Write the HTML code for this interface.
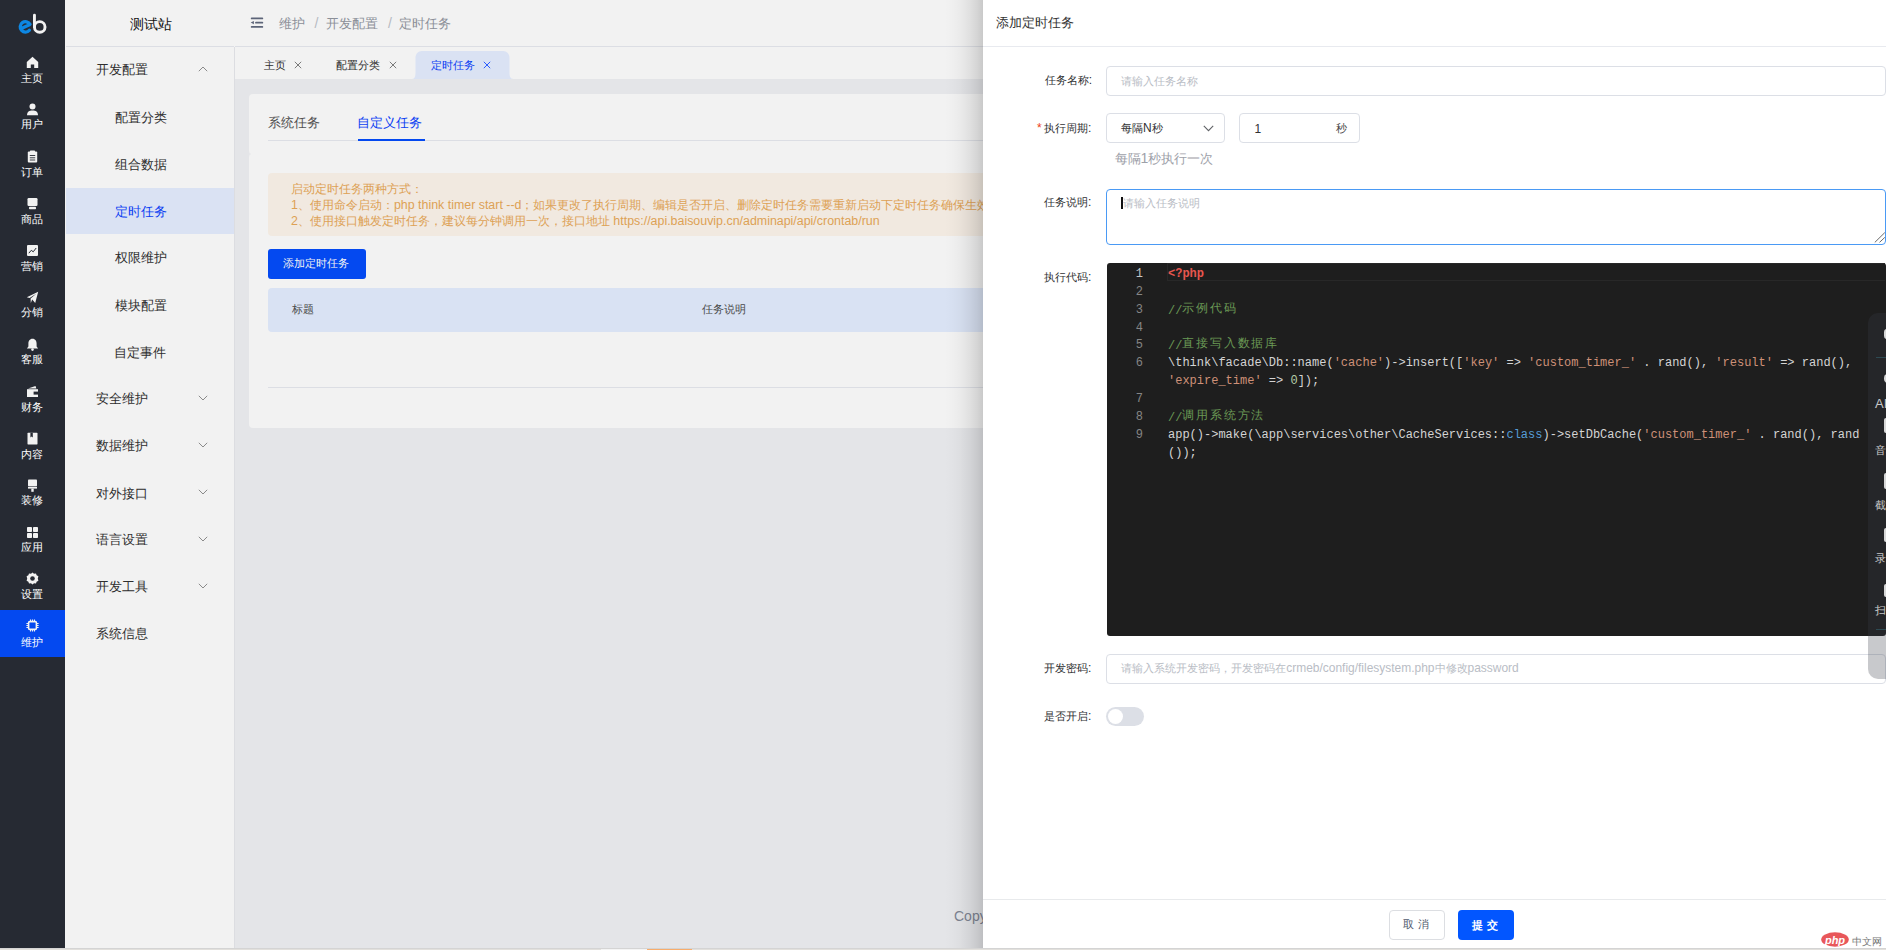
<!DOCTYPE html><html><head><meta charset="utf-8"><title>定时任务</title><style>
*{margin:0;padding:0;box-sizing:border-box}
html,body{width:1886px;height:950px;overflow:hidden;background:#e4e5e8;font-family:"Liberation Sans",sans-serif;color:#333}
.a{position:absolute}
.t{position:absolute;white-space:nowrap}
.inp{position:absolute;border:1px solid #dcdfe6;border-radius:4px;background:#fff}
.code{position:absolute;font-family:"Liberation Mono",monospace;font-size:12px;line-height:18px;white-space:pre;color:#d4d4d4}
.ln{position:absolute;font-family:"Liberation Mono",monospace;font-size:12px;line-height:18px;color:#858585;text-align:right;width:40px}
.cj{font-family:"Liberation Sans",sans-serif;font-size:12px;letter-spacing:1.8px;position:relative;top:-2px}
.str{color:#ce9178}.cm{color:#6a9955}.kw{color:#569cd6}.php{color:#e8564e;font-weight:bold}.num{color:#b5cea8}
</style></head><body>
<div class="a" style="left:0;top:0;width:65px;height:948px;background:#262a33"></div>
<svg class="a" style="left:0;top:0" width="65" height="48" viewBox="0 0 65 48">
<path d="M29.4 30.2 A5.2 5.2 0 1 1 30.0 24.4 L21.3 28.4" fill="none" stroke="#0d87e3" stroke-width="3.3" stroke-linecap="round" stroke-linejoin="round"/>
<circle cx="39.75" cy="26.9" r="5.3" fill="none" stroke="#f2f2f2" stroke-width="2.9"/>
<path d="M34.45 15.3 V26.9" fill="none" stroke="#f2f2f2" stroke-width="2.9" stroke-linecap="round"/>
</svg>
<div id="s1_0" class="t" style="left:20.50px;top:70.50px;line-height:12.19px;color:#fff;"><span style="font-size:11.4px">主页</span></div>
<svg class="a" style="left:26px;top:56px" width="13" height="13" viewBox="0 0 13 13" fill="#f2f2f2">
<path d="M6.5 0.8 L12.2 6 V12 H8.2 V8.6 H4.8 V12 H0.8 V6 Z"/>
</svg>
<div id="s1_1" class="t" style="left:20.50px;top:117.25px;line-height:12.19px;color:#fff;"><span style="font-size:11.4px">用户</span></div>
<svg class="a" style="left:26px;top:103px" width="13" height="13" viewBox="0 0 13 13" fill="#f2f2f2">
<circle cx="6.5" cy="3.6" r="3"/><path d="M1 12.3 C1 8.6 3.2 7.4 6.5 7.4 C9.8 7.4 12 8.6 12 12.3 Z"/>
</svg>
<div id="s1_2" class="t" style="left:20.50px;top:165.00px;line-height:12.19px;color:#fff;"><span style="font-size:11.4px">订单</span></div>
<svg class="a" style="left:26px;top:150px" width="13" height="13" viewBox="0 0 13 13" fill="#f2f2f2">
<rect x="1.8" y="1.6" width="9.4" height="11" rx="1"/><rect x="4" y="0.4" width="5" height="2.4" rx=".6"/><path d="M3.8 5.5h5.4M3.8 7.8h5.4M3.8 10h5.4" stroke="#262a33" stroke-width=".9"/>
</svg>
<div id="s1_3" class="t" style="left:20.50px;top:211.75px;line-height:12.19px;color:#fff;"><span style="font-size:11.4px">商品</span></div>
<svg class="a" style="left:26px;top:197px" width="13" height="13" viewBox="0 0 13 13" fill="#f2f2f2">
<rect x="1.5" y="1" width="10" height="8" rx="1.2"/><rect x="3" y="9.8" width="7" height="2.4" rx=".8"/>
</svg>
<div id="s1_4" class="t" style="left:20.50px;top:258.50px;line-height:12.19px;color:#fff;"><span style="font-size:11.4px">营销</span></div>
<svg class="a" style="left:26px;top:244px" width="13" height="13" viewBox="0 0 13 13" fill="#f2f2f2">
<rect x="1" y="1" width="11" height="11" rx="1"/><path d="M2.8 9.2 L5.3 6.3 L7.2 7.8 L10.2 4" fill="none" stroke="#262a33" stroke-width="1"/>
</svg>
<div id="s1_5" class="t" style="left:20.50px;top:305.25px;line-height:12.19px;color:#fff;"><span style="font-size:11.4px">分销</span></div>
<svg class="a" style="left:26px;top:291px" width="13" height="13" viewBox="0 0 13 13" fill="#f2f2f2">
<path d="M0.8 6.2 L12.2 0.8 L9.2 12 L6.2 8.6 L4.8 12 L4.6 7.6 L10.6 2.6 L3.6 7 Z"/>
</svg>
<div id="s1_6" class="t" style="left:20.50px;top:352.00px;line-height:12.19px;color:#fff;"><span style="font-size:11.4px">客服</span></div>
<svg class="a" style="left:26px;top:338px" width="13" height="13" viewBox="0 0 13 13" fill="#f2f2f2">
<path d="M6.5 0.8 C3.6 0.8 2.4 3.2 2.4 5.6 V8.6 L0.9 10.4 H12.1 L10.6 8.6 V5.6 C10.6 3.2 9.4 0.8 6.5 0.8 Z"/><circle cx="6.5" cy="11.6" r="1.3"/>
</svg>
<div id="s1_7" class="t" style="left:20.50px;top:399.75px;line-height:12.19px;color:#fff;"><span style="font-size:11.4px">财务</span></div>
<svg class="a" style="left:26px;top:385px" width="13" height="13" viewBox="0 0 13 13" fill="#f2f2f2">
<path d="M1 4.2 H12 V12 H1 Z"/><path d="M2 3.6 L9.5 0.9 L10.4 3.6 Z"/><rect x="7.6" y="6.6" width="4.4" height="3" fill="#262a33"/>
</svg>
<div id="s1_8" class="t" style="left:20.50px;top:446.50px;line-height:12.19px;color:#fff;"><span style="font-size:11.4px">内容</span></div>
<svg class="a" style="left:26px;top:432px" width="13" height="13" viewBox="0 0 13 13" fill="#f2f2f2">
<rect x="1.5" y="0.8" width="10" height="11.6" rx=".6"/><path d="M4.4 0.8 V5.6 L5.6 4.6 L6.8 5.6 V0.8" fill="#262a33"/>
</svg>
<div id="s1_9" class="t" style="left:20.50px;top:493.25px;line-height:12.19px;color:#fff;"><span style="font-size:11.4px">装修</span></div>
<svg class="a" style="left:26px;top:479px" width="13" height="13" viewBox="0 0 13 13" fill="#f2f2f2">
<rect x="2" y="0.6" width="9" height="6.6" rx=".8"/><rect x="2" y="7.8" width="9" height="1.8"/><rect x="5.3" y="9.6" width="2.4" height="3.2"/>
</svg>
<div id="s1_10" class="t" style="left:20.50px;top:540.00px;line-height:12.19px;color:#fff;"><span style="font-size:11.4px">应用</span></div>
<svg class="a" style="left:26px;top:526px" width="13" height="13" viewBox="0 0 13 13" fill="#f2f2f2">
<rect x="1" y="1" width="5" height="5" rx=".8"/><rect x="7" y="1" width="5" height="5" rx=".8"/><rect x="1" y="7" width="5" height="5" rx=".8"/><rect x="7" y="7" width="5" height="5" rx=".8"/>
</svg>
<div id="s1_11" class="t" style="left:20.50px;top:586.75px;line-height:12.19px;color:#fff;"><span style="font-size:11.4px">设置</span></div>
<svg class="a" style="left:26px;top:572px" width="13" height="13" viewBox="0 0 13 13" fill="#f2f2f2">
<path d="M6.5 0.4 L8 1.8 L10 1.4 L10.6 3.3 L12.4 4.2 L11.8 6.5 L12.4 8.8 L10.6 9.7 L10 11.6 L8 11.2 L6.5 12.6 L5 11.2 L3 11.6 L2.4 9.7 L0.6 8.8 L1.2 6.5 L0.6 4.2 L2.4 3.3 L3 1.4 L5 1.8 Z"/><circle cx="6.5" cy="6.5" r="2.3" fill="#262a33"/>
</svg>
<div class="a" style="left:0;top:610px;width:65px;height:47px;background:#0449f0"></div>
<div id="s1_12" class="t" style="left:20.50px;top:634.50px;line-height:12.19px;color:#fff;"><span style="font-size:11.4px">维护</span></div>
<svg class="a" style="left:26px;top:619px" width="13" height="13" viewBox="0 0 13 13" fill="#f2f2f2">
<rect x="2.6" y="2.6" width="7.8" height="7.8" rx="1.2" fill="none" stroke="#f2f2f2" stroke-width="1.6"/><path d="M4.5 0.4v2.2M6.5 0.4v2.2M8.5 0.4v2.2M4.5 10.4v2.2M6.5 10.4v2.2M8.5 10.4v2.2M0.4 4.5h2.2M0.4 6.5h2.2M0.4 8.5h2.2M10.4 4.5h2.2M10.4 6.5h2.2M10.4 8.5h2.2" stroke="#f2f2f2" stroke-width="1.1"/>
</svg>
<div class="a" style="left:65px;top:0;width:170px;height:948px;background:#f2f2f2"></div>
<div id="s2_title" class="t" style="left:129.50px;top:17.00px;line-height:14.55px;color:#111;"><span style="font-size:13.6px">测试站</span></div>
<div class="a" style="left:66px;top:46px;width:168px;height:1px;background:#dcdee4"></div>
<div id="m_0" class="t" style="left:96.40px;top:62.40px;line-height:14.22px;color:#2e2e2e;"><span style="font-size:13.3px">开发配置</span></div>
<svg class="a" style="left:198px;top:66px" width="10" height="6" viewBox="0 0 10 6"><path d="M0.8 5.2 L5 1 L9.2 5.2" fill="none" stroke="#8a8a8a" stroke-width="1"/></svg>
<div id="m_1" class="t" style="left:115.20px;top:110.10px;line-height:14.22px;color:#2e2e2e;"><span style="font-size:13.3px">配置分类</span></div>
<div id="m_2" class="t" style="left:115.20px;top:156.80px;line-height:14.22px;color:#2e2e2e;"><span style="font-size:13.3px">组合数据</span></div>
<div class="a" style="left:66px;top:188px;width:168px;height:46px;background:#dae2f3"></div>
<div id="m_3" class="t" style="left:115.20px;top:203.50px;line-height:14.22px;color:#0b40f2;"><span style="font-size:13.3px">定时任务</span></div>
<div id="m_4" class="t" style="left:115.20px;top:250.20px;line-height:14.22px;color:#2e2e2e;"><span style="font-size:13.3px">权限维护</span></div>
<div id="m_5" class="t" style="left:115.20px;top:297.90px;line-height:14.22px;color:#2e2e2e;"><span style="font-size:13.3px">模块配置</span></div>
<div id="m_6" class="t" style="left:114.20px;top:344.60px;line-height:14.22px;color:#2e2e2e;"><span style="font-size:13.3px">自定事件</span></div>
<div id="m_7" class="t" style="left:96.40px;top:391.30px;line-height:14.22px;color:#2e2e2e;"><span style="font-size:13.3px">安全维护</span></div>
<svg class="a" style="left:198px;top:395px" width="10" height="6" viewBox="0 0 10 6"><path d="M0.8 0.8 L5 5 L9.2 0.8" fill="none" stroke="#8a8a8a" stroke-width="1"/></svg>
<div id="m_8" class="t" style="left:96.40px;top:438.00px;line-height:14.22px;color:#2e2e2e;"><span style="font-size:13.3px">数据维护</span></div>
<svg class="a" style="left:198px;top:442px" width="10" height="6" viewBox="0 0 10 6"><path d="M0.8 0.8 L5 5 L9.2 0.8" fill="none" stroke="#8a8a8a" stroke-width="1"/></svg>
<div id="m_9" class="t" style="left:96.40px;top:485.70px;line-height:14.22px;color:#2e2e2e;"><span style="font-size:13.3px">对外接口</span></div>
<svg class="a" style="left:198px;top:489px" width="10" height="6" viewBox="0 0 10 6"><path d="M0.8 0.8 L5 5 L9.2 0.8" fill="none" stroke="#8a8a8a" stroke-width="1"/></svg>
<div id="m_10" class="t" style="left:96.40px;top:532.40px;line-height:14.22px;color:#2e2e2e;"><span style="font-size:13.3px">语言设置</span></div>
<svg class="a" style="left:198px;top:536px" width="10" height="6" viewBox="0 0 10 6"><path d="M0.8 0.8 L5 5 L9.2 0.8" fill="none" stroke="#8a8a8a" stroke-width="1"/></svg>
<div id="m_11" class="t" style="left:96.40px;top:579.10px;line-height:14.22px;color:#2e2e2e;"><span style="font-size:13.3px">开发工具</span></div>
<svg class="a" style="left:198px;top:583px" width="10" height="6" viewBox="0 0 10 6"><path d="M0.8 0.8 L5 5 L9.2 0.8" fill="none" stroke="#8a8a8a" stroke-width="1"/></svg>
<div id="m_12" class="t" style="left:96.40px;top:625.80px;line-height:14.22px;color:#2e2e2e;"><span style="font-size:13.3px">系统信息</span></div>
<div class="a" style="left:234px;top:47px;width:1px;height:901px;background:#dcdde1"></div>
<div class="a" style="left:235px;top:0;width:1651px;height:47px;background:#f2f2f2;border-bottom:1px solid #dcdee4"></div>
<svg class="a" style="left:250px;top:17px" width="14" height="12" viewBox="0 0 14 12" fill="#5c6478"><rect x="0.8" y="0.4" width="12.4" height="1.9" rx=".9"/><rect x="5.1" y="4.7" width="8.1" height="1.9" rx=".9"/><path d="M0.7 5.6 L3.9 3.9 V7.3 Z"/><rect x="0.8" y="8.9" width="12.4" height="1.9" rx=".9"/></svg>
<div id="bc1" class="t" style="left:279.20px;top:15.50px;line-height:14.12px;color:#8b8f98;"><span style="font-size:13.2px">维护</span></div>
<div id="bc2" class="t" style="left:314.50px;top:15.50px;line-height:14.12px;color:#b6bac2;"><span style="font-size:14.12px">/</span></div>
<div id="bc3" class="t" style="left:325.80px;top:15.50px;line-height:14.12px;color:#8b8f98;"><span style="font-size:13.2px">开发配置</span></div>
<div id="bc4" class="t" style="left:388.00px;top:15.50px;line-height:14.12px;color:#b6bac2;"><span style="font-size:14.12px">/</span></div>
<div id="bc5" class="t" style="left:399.20px;top:15.50px;line-height:14.12px;color:#8b8f98;"><span style="font-size:13.2px">定时任务</span></div>
<div class="a" style="left:235px;top:47px;width:1651px;height:32px;background:#f2f2f2"></div>
<svg class="a" style="left:412px;top:50px" width="102" height="29" viewBox="0 0 102 29"><path d="M0 29 C3 29 3.5 26 3.5 22 V8 C3.5 4 6 1 10 1 H91 C95 1 97.5 4 97.5 8 V22 C97.5 26 98 29 101.5 29 Z" fill="#dae2f3"/></svg>
<div id="tab1" class="t" style="left:264.00px;top:58.00px;line-height:11.98px;color:#2e2e2e;"><span style="font-size:11.2px">主页</span></div>
<svg class="a" style="left:294.0px;top:61.0px" width="8" height="8" viewBox="0 0 8 8"><path d="M0.8 0.8 L7.2 7.2 M7.2 0.8 L0.8 7.2" stroke="#7a7a7a" stroke-width="1"/></svg>
<div id="tab2" class="t" style="left:336.00px;top:58.00px;line-height:11.98px;color:#2e2e2e;"><span style="font-size:11.2px">配置分类</span></div>
<svg class="a" style="left:389.0px;top:61.0px" width="8" height="8" viewBox="0 0 8 8"><path d="M0.8 0.8 L7.2 7.2 M7.2 0.8 L0.8 7.2" stroke="#7a7a7a" stroke-width="1"/></svg>
<div id="tab3" class="t" style="left:430.60px;top:58.00px;line-height:11.98px;color:#0b40f2;"><span style="font-size:11.2px">定时任务</span></div>
<svg class="a" style="left:483.0px;top:61.0px" width="8" height="8" viewBox="0 0 8 8"><path d="M0.8 0.8 L7.2 7.2 M7.2 0.8 L0.8 7.2" stroke="#2a5cff" stroke-width="1"/></svg>
<div class="a" style="left:249px;top:94px;width:1700px;height:334px;background:#f2f2f2;border-radius:4px"></div>
<svg class="a" style="left:249px;top:151px" width="3" height="6" viewBox="0 0 3 6"><path d="M0 0 Q0 2.5 2.2 3 Q0 3.5 0 6 Z" fill="#e6e7ea"/></svg>
<div id="ct1" class="t" style="left:268.40px;top:114.50px;line-height:14.12px;color:#505050;"><span style="font-size:13.2px">系统任务</span></div>
<div id="ct2" class="t" style="left:357.00px;top:114.50px;line-height:14.12px;color:#0b40f2;"><span style="font-size:13.2px">自定义任务</span></div>
<div class="a" style="left:268px;top:140px;width:1700px;height:1px;background:#dcdee4"></div>
<div class="a" style="left:358px;top:139px;width:67px;height:2px;background:#0449f0"></div>
<div class="a" style="left:268px;top:173px;width:1700px;height:63px;background:#f1e9e0;border-radius:4px"></div>
<div id="al1" class="t" style="left:291.00px;top:181.50px;line-height:12.41px;color:#dda155;"><span style="font-size:11.6px">启动定时任务两种方式：</span></div>
<div id="al2" class="t" style="left:291.00px;top:198.00px;line-height:12.41px;color:#dda155;"><span style="font-size:12.41px">1</span><span style="font-size:11.6px">、使用命令启动：</span><span style="font-size:12.41px">php think timer start --d</span><span style="font-size:11.6px">；如果更改了执行周期、编辑是否开启、删除定时任务需要重新启动下定时任务确保生效</span></div>
<div id="al3" class="t" style="left:291.00px;top:213.50px;line-height:12.41px;color:#dda155;"><span style="font-size:12.41px">2</span><span style="font-size:11.6px">、使用接口触发定时任务，建议每分钟调用一次，接口地址</span><span style="font-size:12.41px"> https://api.baisouvip.cn/adminapi/api/crontab/run</span></div>
<div class="a" style="left:268px;top:249px;width:98px;height:30px;background:#0449f0;border-radius:3px"></div>
<div id="btn1" class="t" style="left:283.00px;top:256.00px;line-height:11.98px;color:#f2f2f2;"><span style="font-size:11.2px">添加定时任务</span></div>
<div class="a" style="left:268px;top:288px;width:1700px;height:44px;background:#d9e2f3;border-radius:4px 0 0 4px"></div>
<div id="th1" class="t" style="left:291.80px;top:301.50px;line-height:11.98px;color:#4a4a4a;"><span style="font-size:11.2px">标题</span></div>
<div id="th2" class="t" style="left:702.20px;top:301.50px;line-height:11.98px;color:#4a4a4a;"><span style="font-size:11.2px">任务说明</span></div>
<div class="a" style="left:268px;top:387px;width:1700px;height:1px;background:#dcdee4"></div>
<div id="copy" class="t" style="left:954.00px;top:909.00px;line-height:14px;color:#7d8391;"><span style="font-size:14px">Copyright</span></div>
<div class="a" style="left:945px;top:0;width:38px;height:948px;background:linear-gradient(to right,rgba(0,0,0,0),rgba(0,0,0,0.01) 20%,rgba(0,0,0,0.03) 40%,rgba(0,0,0,0.075) 65%,rgba(0,0,0,0.12) 85%,rgba(0,0,0,0.17))"></div>
<div class="a" style="left:983px;top:0;width:903px;height:948px;background:#fff"></div>
<div id="dtitle" class="t" style="left:996.00px;top:14.50px;line-height:14.12px;color:#333;"><span style="font-size:13.2px">添加定时任务</span></div>
<div class="a" style="left:983px;top:46px;width:903px;height:1px;background:#e8eaef"></div>
<div id="lb1" class="t" style="left:1044.80px;top:72.50px;line-height:11.98px;color:#303133;"><span style="font-size:11.2px">任务名称</span><span style="font-size:11.98px">:</span></div>
<div class="inp" style="left:1106px;top:66px;width:780px;height:30px"></div>
<div id="ph1" class="t" style="left:1121.00px;top:74.00px;line-height:11.98px;color:#b9bdc5;"><span style="font-size:11.2px">请输入任务名称</span></div>
<div id="star" class="t" style="left:1037.00px;top:121.00px;line-height:12px;color:#ed4014;"><span style="font-size:12px">*</span></div>
<div id="lb2" class="t" style="left:1044.00px;top:120.50px;line-height:11.98px;color:#303133;"><span style="font-size:11.2px">执行周期</span><span style="font-size:11.98px">:</span></div>
<div class="inp" style="left:1106px;top:113px;width:119px;height:30px"></div>
<div id="sel" class="t" style="left:1121.00px;top:120.50px;line-height:11.98px;color:#303133;"><span style="font-size:11.2px">每隔</span><span style="font-size:11.98px">N</span><span style="font-size:11.2px">秒</span></div>
<svg class="a" style="left:1203px;top:125px" width="11" height="7" viewBox="0 0 11 7"><path d="M0.8 0.8 L5.5 5.6 L10.2 0.8" fill="none" stroke="#606266" stroke-width="1.1"/></svg>
<div class="inp" style="left:1239px;top:113px;width:121px;height:30px"></div>
<div id="num1" class="t" style="left:1254.50px;top:121.50px;line-height:12px;color:#303133;"><span style="font-size:12px">1</span></div>
<div id="sec" class="t" style="left:1335.80px;top:121.00px;line-height:11.76px;color:#444;"><span style="font-size:11px">秒</span></div>
<div id="help" class="t" style="left:1114.60px;top:150.50px;line-height:14.12px;color:#9ea1a9;"><span style="font-size:13.2px">每隔</span><span style="font-size:14.12px">1</span><span style="font-size:13.2px">秒执行一次</span></div>
<div id="lb3" class="t" style="left:1044.00px;top:195.00px;line-height:11.98px;color:#303133;"><span style="font-size:11.2px">任务说明</span><span style="font-size:11.98px">:</span></div>
<div class="inp" style="left:1106px;top:189px;width:780px;height:56px;border-color:#4a9af5"></div>
<div class="a" style="left:1121px;top:197px;width:2px;height:12px;background:#111"></div>
<svg class="a" style="left:1873px;top:231px" width="13" height="13" viewBox="0 0 13 13"><path d="M1.8 11.4 L11.8 1.6 M6.5 11.4 L11.8 6.4" stroke="#6a6a6a" stroke-width="1"/></svg>
<div id="ph2" class="t" style="left:1123.20px;top:196.00px;line-height:11.66px;color:#b9bdc5;"><span style="font-size:10.9px">请输入任务说明</span></div>
<div id="lb4" class="t" style="left:1044.00px;top:269.50px;line-height:11.98px;color:#303133;"><span style="font-size:11.2px">执行代码</span><span style="font-size:11.98px">:</span></div>
<div class="a" style="left:1107px;top:263px;width:779px;height:373px;background:#1e1e1e;border-radius:3px"></div>
<div class="a" style="left:1167px;top:263px;width:718px;height:18px;border:1px solid #282828;border-right:0"></div>
<div class="ln" style="left:1103px;top:265.00px;color:#c6c6c6">1</div>
<div class="code" style="left:1168px;top:265.00px"><span class="php">&lt;?php</span></div>
<div class="ln" style="left:1103px;top:282.85px;color:#858585">2</div>
<div class="code" style="left:1168px;top:282.85px"></div>
<div class="ln" style="left:1103px;top:300.70px;color:#858585">3</div>
<div class="code" style="left:1168px;top:300.70px"><span class="cm">//<span class="cj">示例代码</span></span></div>
<div class="ln" style="left:1103px;top:318.55px;color:#858585">4</div>
<div class="code" style="left:1168px;top:318.55px"></div>
<div class="ln" style="left:1103px;top:336.40px;color:#858585">5</div>
<div class="code" style="left:1168px;top:336.40px"><span class="cm">//<span class="cj">直接写入数据库</span></span></div>
<div class="ln" style="left:1103px;top:354.25px;color:#858585">6</div>
<div class="code" style="left:1168px;top:354.25px">\think\facade\Db::name(<span class="str">'cache'</span>)-&gt;insert([<span class="str">'key'</span> =&gt; <span class="str">'custom_timer_'</span> . rand(), <span class="str">'result'</span> =&gt; rand(),</div>
<div class="code" style="left:1168px;top:372.10px"><span class="str">'expire_time'</span> =&gt; <span class="num">0</span>]);</div>
<div class="ln" style="left:1103px;top:389.95px;color:#858585">7</div>
<div class="code" style="left:1168px;top:389.95px"></div>
<div class="ln" style="left:1103px;top:407.80px;color:#858585">8</div>
<div class="code" style="left:1168px;top:407.80px"><span class="cm">//<span class="cj">调用系统方法</span></span></div>
<div class="ln" style="left:1103px;top:425.65px;color:#858585">9</div>
<div class="code" style="left:1168px;top:425.65px">app()-&gt;make(\app\services\other\CacheServices::<span class="kw">class</span>)-&gt;setDbCache(<span class="str">'custom_timer_'</span> . rand(), rand</div>
<div class="code" style="left:1168px;top:443.50px">());</div>
<div id="lb5" class="t" style="left:1044.00px;top:661.00px;line-height:11.98px;color:#303133;"><span style="font-size:11.2px">开发密码</span><span style="font-size:11.98px">:</span></div>
<div class="inp" style="left:1106px;top:654px;width:780px;height:30px"></div>
<div id="ph3" class="t" style="left:1121.20px;top:661.00px;line-height:11.98px;color:#b9bdc5;"><span style="font-size:11.2px">请输入系统开发密码，开发密码在</span><span style="font-size:11.98px">crmeb/config/filesystem.php</span><span style="font-size:11.2px">中修改</span><span style="font-size:11.98px">password</span></div>
<div class="a" style="left:1868px;top:313px;width:30px;height:366px;background:rgba(58,62,72,0.28);border-radius:10px 0 0 10px"></div>
<div class="a" style="left:1868px;top:313px;width:18px;height:365px;overflow:hidden"><div class="a" style="left:16px;top:16px;width:6px;height:10px;background:#d8d8d8;border-radius:3px 0 0 3px"></div><div class="a" style="left:8px;top:44px;width:12px;height:1px;background:#2e4a52"></div><div class="a" style="left:16px;top:61px;width:6px;height:9px;background:#d8d8d8;border-radius:4px 0 0 4px"></div><div class="t" style="left:7px;top:84px;font-size:13px;line-height:13px;color:#c8c8c8">AI</div><div class="a" style="left:16px;top:105px;width:6px;height:15px;background:#d8d8d8;border-radius:2px 0 0 2px"></div><div class="t" style="left:7px;top:132px;font-size:11px;line-height:11px;color:#c8c8c8">音频</div><div class="a" style="left:16px;top:160px;width:6px;height:16px;background:#d8d8d8;border-radius:2px 0 0 2px"></div><div class="t" style="left:7px;top:187px;font-size:11px;line-height:11px;color:#c8c8c8">截图</div><div class="a" style="left:16px;top:215px;width:6px;height:14px;background:#d8d8d8;border-radius:2px 0 0 2px"></div><div class="t" style="left:7px;top:240px;font-size:11px;line-height:11px;color:#c8c8c8">录屏</div><div class="a" style="left:16px;top:271px;width:6px;height:13px;background:#d8d8d8;border-radius:2px 0 0 2px"></div><div class="t" style="left:7px;top:292px;font-size:11px;line-height:11px;color:#c8c8c8">扫码</div><div class="a" style="left:8px;top:316px;width:12px;height:1px;background:#2e4a52"></div></div>
<div id="lb6" class="t" style="left:1044.00px;top:708.50px;line-height:11.98px;color:#303133;"><span style="font-size:11.2px">是否开启</span><span style="font-size:11.98px">:</span></div>
<div class="a" style="left:1106px;top:707px;width:38px;height:19px;background:#dcdfe6;border-radius:10px"></div>
<div class="a" style="left:1108px;top:709px;width:15px;height:15px;background:#fff;border-radius:50%"></div>
<div class="a" style="left:983px;top:899px;width:903px;height:1px;background:#e8eaec"></div>
<div class="a" style="left:1389px;top:910px;width:56px;height:30px;border:1px solid #dcdee2;border-radius:4px;background:#fff"></div>
<div id="cancel" class="t" style="left:1403.40px;top:917.00px;line-height:11.76px;color:#515a6e;letter-spacing:4px"><span style="font-size:11px">取消</span></div>
<div class="a" style="left:1458px;top:910px;width:56px;height:30px;border-radius:4px;background:#0256ff"></div>
<div id="submit" class="t" style="left:1471.80px;top:918.00px;line-height:11.98px;color:#fff;letter-spacing:4px;font-weight:bold"><span style="font-size:11.2px">提交</span></div>
<svg class="a" style="left:1821px;top:932px" width="30" height="16" viewBox="0 0 30 16"><ellipse cx="14" cy="7.5" rx="13.8" ry="7.2" fill="#e8575a"/><text x="14" y="11.5" text-anchor="middle" font-family="Liberation Sans" font-style="italic" font-weight="bold" font-size="11" fill="#fff">php</text></svg>
<div id="wm" class="t" style="left:1852.20px;top:934.50px;line-height:10.27px;color:#777;"><span style="font-size:9.6px">中文网</span></div>
<div class="a" style="left:0;top:948px;width:1886px;height:1px;background:#d4d4d4"></div>
<div class="a" style="left:0;top:949px;width:1886px;height:1px;background:#e2e0dc"></div>
<div class="a" style="left:601px;top:949px;width:46px;height:1px;background:#f4f4f4"></div>
<div class="a" style="left:647px;top:949px;width:45px;height:1px;background:#f8ad6c"></div>
</body></html>
